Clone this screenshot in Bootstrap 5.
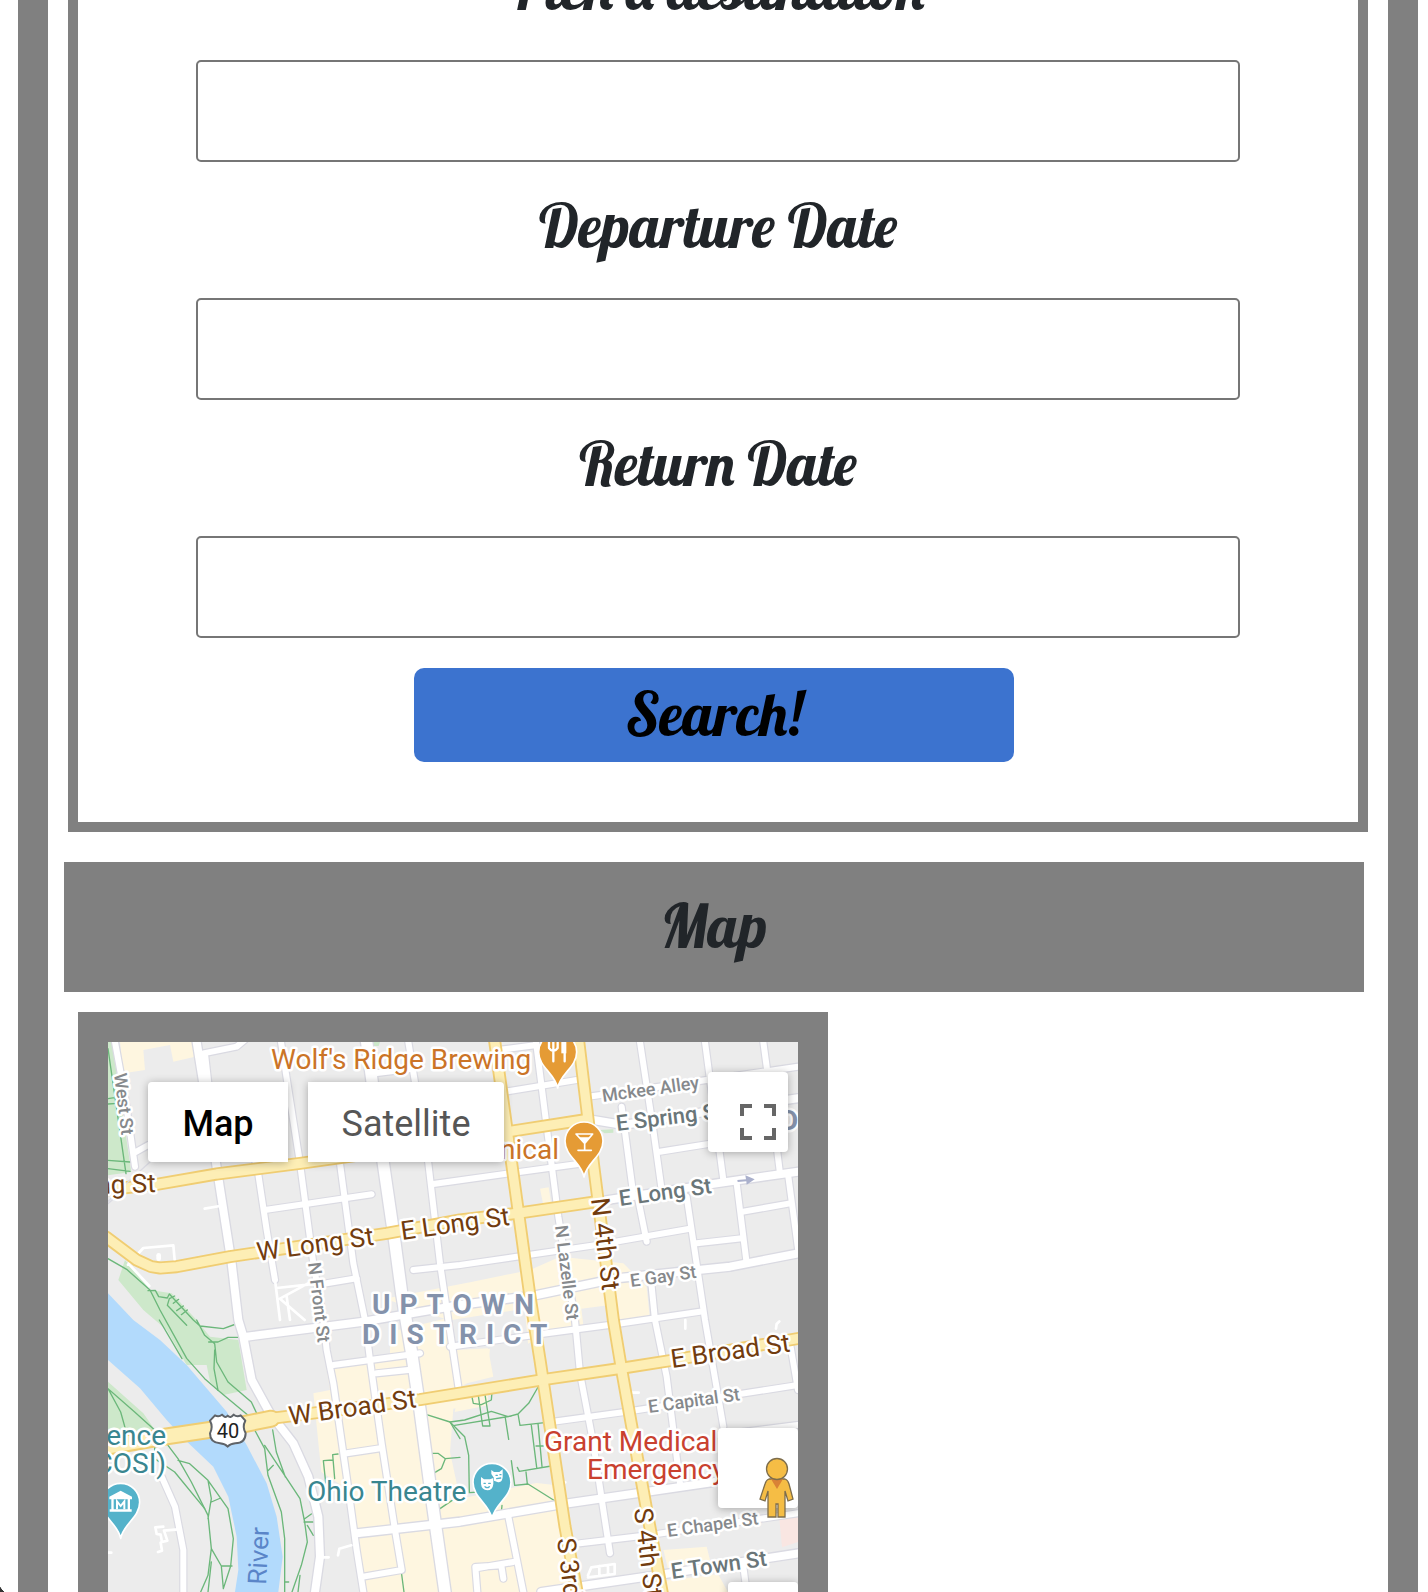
<!DOCTYPE html>
<html lang="en">
<head>
<meta charset="utf-8">
<meta name="viewport" content="width=device-width, initial-scale=1">
<title>Trip search</title>
<link href="https://cdn.jsdelivr.net/npm/bootstrap@5.3.0/dist/css/bootstrap.min.css" rel="stylesheet">
<script src="https://cdn.jsdelivr.net/npm/bootstrap@5.3.0/dist/js/bootstrap.bundle.min.js"></script>
<style>
  :root { --frame: #808080; --ink: #212529; }
  body { background: #fff; overflow-x: hidden; }
  .shell { margin: -76px 10px 0 18px; border: solid var(--frame); border-width: 0 30px; overflow: hidden; }
  .script-type { font: 400 60px/72px Lobster, "Liberation Serif", serif; color: var(--ink); }
  .trip-form { margin: 0 20px 30px; padding: 0 118px 60px; border: 10px solid var(--frame); border-top: 0; }
  .trip-label { padding: 28px 0 36px; }
  .trip-input { height: 102px; border: 2px solid #767676; border-radius: 5px; font-size: 40px; padding: 0 20px; background: #fff; }
  .trip-submit { width: 600px; max-width: 100%; height: 94px; margin-top: 30px; padding: 0 0 2px; border: 0; border-radius: 10px; background: #3c73cf; color: #000; }
  .map-title { margin: 0 24px 20px 16px; padding: 28px 0 30px; background: var(--frame); }
  .map-frame { width: 750px; max-width: calc(100% - 30px); margin-left: 30px; border: 30px solid var(--frame); border-bottom: 0; }
  .map-view { height: 550px; background: #ececec; font-family: Roboto, sans-serif; }
  .map-view > svg { display: block; }
  .map-ctl { position: absolute; border: 0; padding: 4px 0 0; background: #fff; box-shadow: 0 1px 8px rgba(0,0,0,.3); font-size: 36px; line-height: 76px; height: 80px; }
  .ctl-map { left: 40px; top: 40px; width: 140px; font-weight: 500; color: #000; border-radius: 4px 0 0 4px; }
  .ctl-sat { left: 200px; top: 40px; width: 196px; color: #565656; border-radius: 0 4px 4px 0; }
  .ctl-full { right: 10px; top: 30px; width: 80px; border-radius: 4px; }
  .ctl-peg { right: 0; top: 386px; width: 80px; border-radius: 4px; }
  .ctl-zoom { right: 0; top: 540px; width: 70px; border-radius: 4px; }
  .map-ctl svg { position: absolute; }
  .ctl-full svg { left: 32px; top: 32px; }
  .ctl-peg svg { left: 41px; top: 29px; }
  .halo text { paint-order: stroke; stroke: #fff; stroke-width: 5px; stroke-linejoin: round; }
  .t-poi { font-size: 28px; }
  .t-main { font-size: 26px; fill: #723c0e; }
  .t-mid { font-size: 22px; font-weight: 500; fill: #6a7679; }
  .t-lane { font-size: 18px; font-weight: 500; fill: #86898c; }
  .t-area { font-size: 28px; font-weight: 700; letter-spacing: 9px; fill: #8492ab; }
  .win-corner { position: absolute; left: 0; top: 1587px; width: 4px; height: 5px; background: linear-gradient(to top right, #333 50%, transparent 55%); }
</style>
</head>
<body class="position-relative">
<main class="shell">
  <form class="trip-form text-center">
    <label class="trip-label script-type d-block" for="dest">Pick a destination</label>
    <input class="trip-input d-block w-100" id="dest" type="text">
    <label class="trip-label script-type d-block" for="depart">Departure Date</label>
    <input class="trip-input d-block w-100" id="depart" type="text">
    <label class="trip-label script-type d-block" for="return">Return Date</label>
    <input class="trip-input d-block w-100" id="return" type="text">
    <div class="pe-2"><button class="trip-submit script-type" type="submit">Search!</button></div>
  </form>

  <h2 class="map-title script-type text-center">Map</h2>

  <section class="map-frame">
    <div class="map-view position-relative overflow-hidden">
      <svg width="690" height="550" viewBox="0 0 690 550" role="img" aria-label="Street map of downtown">
        <svg width="690" height="550" viewBox="0 0 2070 1650" fill="none" stroke-linecap="round" stroke-linejoin="round">
          <defs>
            <g id="lanes">
              <path d="M21 0L51 164L81 374M76 334L121 309M286 34L386 14L410 -6M292 44L301 124L446 364L476 564L501 714"/>
              <path d="M519 0L576 364L616 664L646 834L656 924L676 1024L716 1304L746 1524L766 1650"/>
              <path d="M696 364L736 664L771 834L786 954L821 1204L861 1464L881 1584L766 1604"/>
              <path d="M901 0L961 364L996 664L1021 834L1051 1034"/>
              <path d="M1284 0L1316 254L1351 524L1401 834L1416 994L1456 1204L1486 1404L1506 1534"/>
              <path d="M1541 194L1574 444M1596 0L1636 264L1661 444M1591 474L1616 599M1791 0L1846 414M1966 0L1976 74L2016 394"/>
              <path d="M1736 464L1791 834L1846 1154M1886 424L1916 664M2041 404L2072 634M1631 734L1641 834L1676 1004L1716 1324M2046 904L2070 1044"/>
              <path d="M1201 1424L1246 1650M1906 1574L1916 1650M161 1304L201 1394L226 1524L226 1650"/>
              <path d="M1191 149L1406 114M1171 24L1286 9M801 94L911 80M471 504L791 457M976 426L1206 394L1426 364M916 684L1056 669L1466 609L1741 561"/>
              <path d="M656 724L746 709M1026 914L1316 874L1526 846L1776 809M676 969L936 934M806 994L901 984M716 1234L816 1219"/>
              <path d="M1336 1139L1556 1109L2070 1029M1441 164L1796 114L2070 74M1656 329L1801 306M1766 604L1901 589M1906 509L2046 484"/>
              <path d="M1416 1504L1626 1479L2070 1414M1826 1180L2070 1149M1108 1650L1102 1575L1180 1570L1186 1610M1216 1560L1110 1578"/>
            </g>
            <g id="streets">
              <path d="M266 0L321 344L371 664L391 834L406 884L431 1014L486 1114L556 1204L601 1304L631 1424L636 1544L621 1650"/>
              <path d="M416 884L766 839L1050 790L1286 759L1526 709L1866 674L2070 634"/>
              <path d="M746 1474L1056 1439L1366 1386L1826 1319M1456 234L1546 249L1826 204L2070 169M1466 479L1826 424L2070 389"/>
              <path d="M1300 1650L1686 1594L2070 1534"/>
            </g>
            <path id="high" d="M776 0L826 364L861 604L881 754L911 934L936 1104L976 1404L1011 1650"/>
            <g id="main">
              <path d="M-20 445L146 427L326 396L576 364L746 340L1201 269L1426 234"/>
              <path d="M-6 585L86 654L130 674L156 678L206 674L366 644L836 574L1056 534L1226 514L1466 479"/>
              <path d="M1159 -10L1211 364L1266 764L1296 954L1326 1154L1371 1454L1411 1670"/>
              <path d="M1411 -10L1456 364L1516 834L1541 984L1616 1404L1666 1670"/>
              <path d="M466 1132L936 1073L1306 1013L1546 978L1686 956L2090 886"/>
            </g>
            <path id="broad" d="M-20 1217L176 1183L376 1153L490 1130"/>
            <path id="pin" d="M0 108C-8 64-57 46-57 0A57 57 0 1 1 57 0C57 46 8 64 0 108Z"/>
          </defs>

          <!-- land use -->
          <g fill="#fef6e0">
            <path d="M36 0H256L261 44L196 59L186 9L106 24L111 84L46 94Z"/>
            <path d="M616 1054L666 1044L656 984L846 950L846 870L1010 830L830 770L1090 720L1266 684L1356 644L1546 664L1616 734L1626 834L1300 880L1050 1040L1090 1300L1346 1330L1410 1650H760L716 1340L640 1290Z"/>
            <path d="M1296 440L1322 436L1330 486L1306 490ZM1666 1524L1796 1514L1806 1554L1680 1580ZM1640 1620L1830 1596L1860 1650H1640Z"/>
          </g>
          <path fill="#ececec" d="M1030 834L1250 800L1300 1320L1056 1370L1026 1230L1036 1100L1130 1080L1146 920L1046 930ZM1420 800L1500 790L1510 840L1426 850Z"/>
          <path fill="#fef6e0" d="M1046 924L1140 919L1156 1004L1056 1029ZM1050 1060L1140 1050L1140 1090L1040 1110ZM1060 1376L1340 1330L1350 1380L1060 1424Z"/>
          <path fill="#f9e6e2" d="M2014 1430L2070 1420V1500L2022 1516Z"/>
          <path fill="#cde8ca" d="M0 0H12L70 390L0 400ZM0 1019L106 1114L141 1164L0 1190ZM51 654L126 744L191 754L266 834L306 884L391 894L416 1044L346 1059L306 1019L296 969L236 969L176 864L106 804L31 714ZM790 0H816L812 12H794ZM1476 264L1516 262L1516 272L1490 274Z"/>
          <path fill="#b2dafc" d="M0 754L76 834L156 894L236 969L356 1109L416 1209L476 1324L506 1424L524 1544L511 1650H381L391 1584L386 1484L361 1364L316 1274L226 1189L176 1134L96 1039L0 954Z"/>

          <!-- footpaths -->
          <g stroke="#6bb77a" stroke-width="4">
            <path d="M0 20L54 395M0 170L24 166M0 186L28 184M0 355L66 360M0 380L66 388M0 650L56 682L126 744L156 804L236 949L290 1010L330 1045L420 1120"/>
            <path d="M120 746L142 745L152 764L178 768L184 756L256 834L276 852L346 860L384 846M184 770L178 790L236 850M184 770L200 762M196 784L212 772M206 806L226 792M220 818L238 804M154 834L222 950M266 834L290 880L320 905L326 960L360 1020L430 1080L446 1114M302 900L330 900L360 886L390 886M320 924L318 980L330 1045"/>
            <path d="M0 1040L38 1110L52 1160M0 1040L80 1110L140 1164M180 1210L210 1250L250 1320L300 1420L310 1520L340 1572L372 1572M210 1255L245 1265L300 1315L360 1400L376 1490L368 1572L346 1640M300 1315L310 1370L300 1430M310 1380L338 1368M310 1520L300 1600L278 1650M340 1572L346 1640M310 1560L300 1650"/>
            <path d="M140 1215V1250L200 1290L290 1400M440 1164L470 1220L480 1300L520 1410L530 1490V1650M470 1210L530 1300L576 1370L590 1440L598 1500L580 1570L552 1650M494 1164L505 1230L532 1305M480 1286L496 1270M576 1600L570 1650M530 1620H542M588 1440L616 1440M588 1432L610 1416M598 1450L616 1480"/>
            <path d="M690 1236L674 1238L680 1310M674 1254L646 1256L654 1330M956 1118L1026 1140L1056 1190M972 1234H990L1012 1250L1000 1280L980 1292M1012 1250L1056 1246M996 1400L1040 1370"/>
            <path d="M1026 1140L1070 1134L1150 1108L1200 1124L1230 1116L1262 1084L1292 1032M1040 1150L1210 1122M1026 1140L1070 1184L1082 1240L1084 1352L1114 1350M1230 1116L1236 1150L1310 1142M1270 1150L1286 1276M1290 1144L1302 1274M1192 1128L1202 1192M1228 1276L1234 1288L1330 1272M1210 1256L1220 1330L1260 1326L1346 1380M1254 1290L1258 1326M1284 1212H1306"/>
            <path d="M1090 1056L1096 1084L1120 1088L1150 1074L1152 1050M1110 1054L1124 1152H1146L1130 1052M1182 1390L1180 1410M880 1590L888 1650"/>
          </g>

          <!-- streets: casing, then surface -->
          <g stroke="#dadae2">
            <use href="#lanes" stroke-width="25"/><use href="#streets" stroke-width="32"/><use href="#high" stroke-width="42"/>
          </g>
          <g stroke="#fff">
            <use href="#lanes" stroke-width="18"/><use href="#streets" stroke-width="24"/><use href="#high" stroke-width="34"/>
            <path stroke-width="8" d="M290 500L336 492M60 668L106 618L196 610L200 654M66 670L124 732M501 714L516 834M506 738L600 728M516 770L600 724M516 770L590 834M536 764L546 834M210 1462L168 1466M166 1454L142 1456L146 1476L158 1478L162 1500L178 1496L168 1466M158 1502L162 1526L150 1530M0 1532H10M690 1540L694 1520L730 1510M640 1546H662M2004 860L2006 846L2014 838M1568 1052H1592M1732 834V860M1360 1321H1372M1440 1600L1450 1576L1520 1566V1596L1440 1606M1474 1572V1600M1500 1570V1596"/>
            <path stroke-width="14" d="M152 650V640"/>
          </g>
          <use href="#main" stroke="#f0cd72" stroke-width="39"/><use href="#broad" stroke="#f0cd72" stroke-width="54"/>
          <use href="#main" stroke="#fdeeb5" stroke-width="28"/><use href="#broad" stroke="#fdeeb5" stroke-width="42"/>
          <path stroke="#dadae2" stroke-width="4" d="M0 485L50 440M0 478L70 410L126 360M370 160L410 122M376 166L412 132"/>
          <path fill="#aab0cc" d="M1888 414L1914 412L1912 400L1940 412L1916 428L1915 418L1889 420Z"/>

          <!-- place pins -->
          <g stroke="#fff" stroke-width="5">
            <use href="#pin" x="1349" y="30" fill="#e59b35"/><use href="#pin" x="1428" y="297" fill="#e59b35"/>
            <use href="#pin" x="1152" y="1321" fill="#54b2ca"/><use href="#pin" x="38" y="1381" fill="#54b2ca"/>
          </g>
          <path stroke="#fff" stroke-width="7" d="M1323 0V18Q1336 36 1349 18V0M1336 0V58M1370 58V0"/>
          <path fill="#fff" d="M1360 0H1375V34H1360Z"/>
          <path stroke="#fff" stroke-width="5" d="M1404 276H1454L1430 304ZM1430 304V324M1410 325H1450"/><path fill="#fff" d="M1414 286H1444L1430 304Z"/>
          <path fill="#fff" d="M1150 1296V1284L1158 1290H1174L1184 1282V1306Q1182 1324 1168 1320L1158 1316V1308Z"/>
          <path fill="#fff" d="M1119 1305L1128 1312H1146L1156 1308V1326Q1154 1345 1138 1345Q1121 1344 1119 1326Z"/>
          <path stroke="#54b2ca" stroke-width="4" d="M1128 1324H1132M1142 1324H1147M1131 1334Q1138 1340 1144 1334M1164 1300H1168M1176 1298H1179M1166 1310L1178 1308"/>
          <path fill="#fff" d="M4 1364L38 1346L72 1364V1372H4ZM10 1372H17V1402H10ZM59 1372H66V1402H59ZM5 1402H71V1409H5Z"/>
          <path stroke="#fff" stroke-width="6" stroke-linecap="butt" stroke-linejoin="miter" d="M27 1402V1378L38 1392L49 1378V1402"/>

          <!-- route shield -->
          <path fill="#fff" stroke="#5f6368" stroke-width="6" d="M321 1120Q332 1126 342 1118Q352 1130 359 1121Q368 1130 377 1118Q387 1126 398 1120L412 1136Q402 1154 413 1174Q412 1204 382 1204Q366 1206 359 1214Q352 1206 336 1204Q306 1202 306 1174Q316 1154 306 1136Z"/>
        </svg>

        <g class="halo">
          <text class="t-poi" fill="#cb7427" x="163" y="27">Wolf's Ridge Brewing</text>
          <text class="t-poi" fill="#cb7427" x="451" y="117" text-anchor="end">nical</text>
          <text class="t-poi" fill="#c9412f" x="436" y="409">Grant Medical</text>
          <text class="t-poi" fill="#c9412f" x="479" y="437">Emergency</text>
          <text class="t-poi" fill="#398690" x="199" y="459">Ohio Theatre</text>
          <text class="t-poi" fill="#398690" x="58" y="403" text-anchor="end">ence</text>
          <text class="t-poi" fill="#398690" x="58" y="431" text-anchor="end">COSI)</text>
          <text class="t-main" text-anchor="end" transform="translate(48 150) rotate(-2)">ng St</text>
          <text class="t-main" transform="translate(150 219) rotate(-8)">W Long St</text>
          <text class="t-main" transform="translate(294 198) rotate(-8)">E Long St</text>
          <text class="t-main" transform="translate(182 383) rotate(-8)">W Broad St</text>
          <text class="t-main" transform="translate(564 326) rotate(-8)">E Broad St</text>
          <text class="t-main" transform="translate(483 157) rotate(83)">N 4th St</text>
          <text class="t-main" transform="translate(526 467) rotate(83)">S 4th St</text>
          <text class="t-main" transform="translate(449 497) rotate(83)">S 3rd St</text>
          <text class="t-mid" transform="translate(509 89) rotate(-7)">E Spring St</text>
          <text class="t-mid" transform="translate(512 164) rotate(-8)">E Long St</text>
          <text class="t-mid" transform="translate(564 537) rotate(-8)">E Town St</text>
          <text class="t-lane" transform="translate(495 60) rotate(-8)">Mckee Alley</text>
          <text class="t-lane" transform="translate(523 245) rotate(-8)">E Gay St</text>
          <text class="t-lane" transform="translate(541 371) rotate(-8)">E Capital St</text>
          <text class="t-lane" transform="translate(560 495) rotate(-8)">E Chapel St</text>
          <text class="t-lane" transform="translate(6 32) rotate(83)">West St</text>
          <text class="t-lane" transform="translate(447 184) rotate(83)">N Lazelle St</text>
          <text class="t-lane" transform="translate(200 221) rotate(83)">N Front St</text>
          <text class="t-area" x="264" y="272">UPTOWN</text>
          <text class="t-area" x="254" y="302">DISTRICT</text>
          <text class="t-area" x="672" y="88">D</text>
        </g>
        <text font-size="26" fill="#5a85c8" transform="translate(158 543) rotate(-87)">River</text>
        <text font-size="20" fill="#222" x="120" y="396" text-anchor="middle">40</text>
      </svg>

      <button class="map-ctl ctl-map" type="button">Map</button>
      <button class="map-ctl ctl-sat" type="button">Satellite</button>
      <button class="map-ctl ctl-full" type="button" aria-label="Toggle fullscreen view">
        <svg width="36" height="36" viewBox="0 0 36 36" fill="none" stroke="#666" stroke-width="4"><path d="M2 12V2H12M24 2H34V12M34 24V34H24M12 34H2V24"/></svg>
      </button>
      <button class="map-ctl ctl-peg" type="button" aria-label="Street View">
        <svg width="36" height="62" viewBox="0 0 36 62" fill="#f5bd45" stroke="#7d6d4c" stroke-width="1.3"><path d="M10 22H26Q29 23 30 27L34 42L29 44L26 34V60H19V47H17V60H9V34L6 44L1 42L6 27Q7 23 10 22Z"/><path fill="#d98236" stroke="none" d="M12 22H24L18 32Z"/><circle cx="18" cy="12" r="10.5"/></svg>
      </button>
      <button class="map-ctl ctl-zoom" type="button" aria-label="Zoom in"></button>
    </div>
  </section>
</main>
<div class="win-corner"></div>
</body>
</html>
